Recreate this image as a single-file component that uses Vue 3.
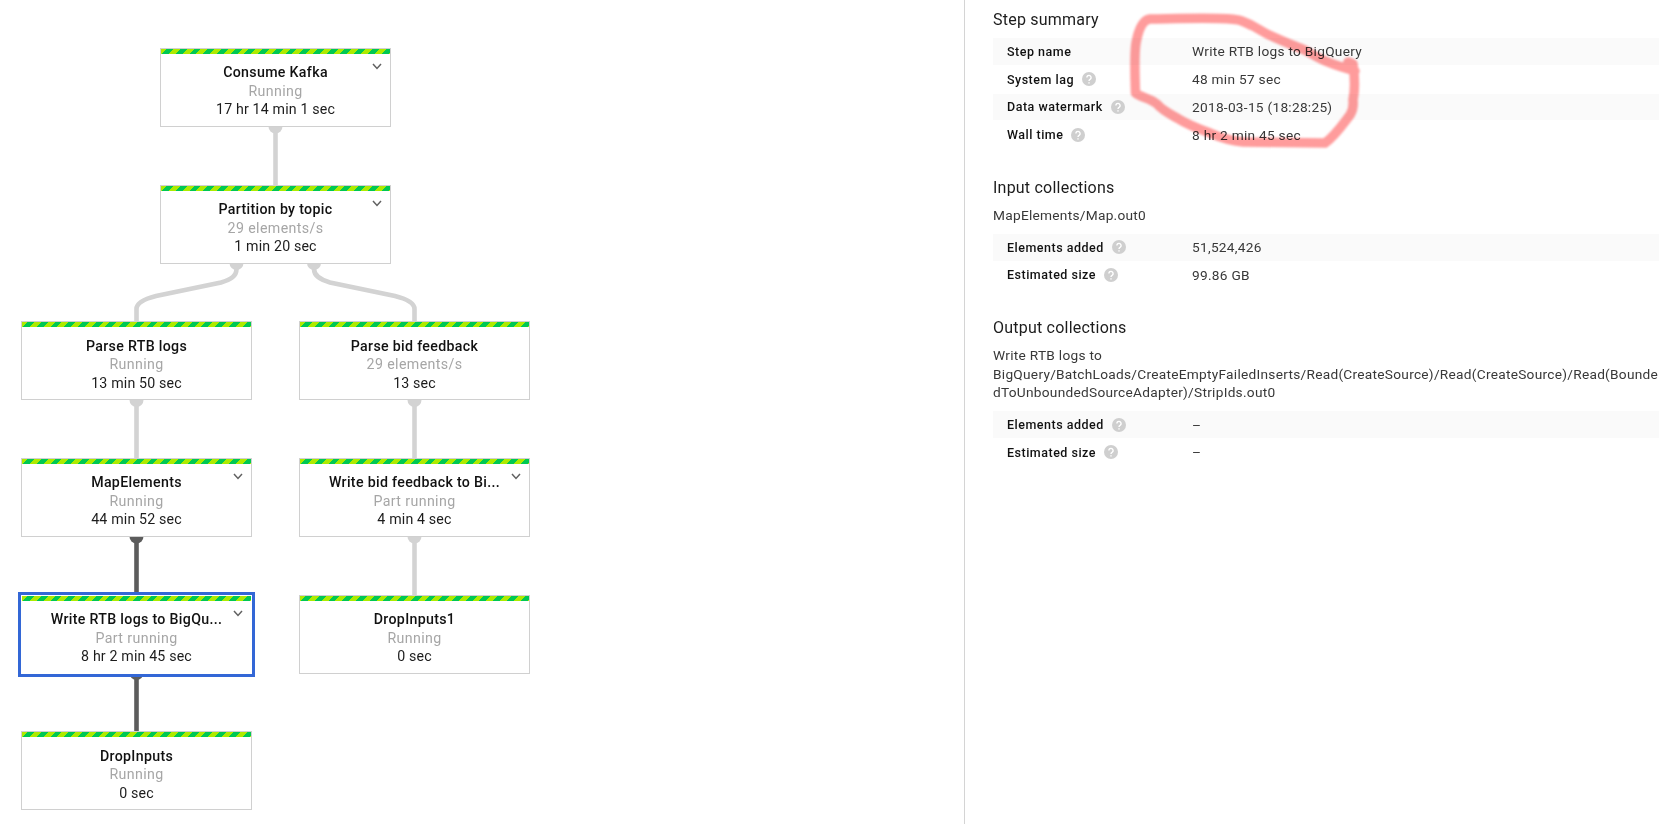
<script setup>
const nodes = [
  { name: 'Consume Kafka', status: 'Running', time: '17 hr 14 min 1 sec', x: 160, y: 48, expandable: true },
  { name: 'Partition by topic', status: '29 elements/s', time: '1 min 20 sec', x: 160, y: 185, expandable: true },
  { name: 'Parse RTB logs', status: 'Running', time: '13 min 50 sec', x: 21, y: 321.4 },
  { name: 'Parse bid feedback', status: '29 elements/s', time: '13 sec', x: 299, y: 321.4 },
  { name: 'MapElements', status: 'Running', time: '44 min 52 sec', x: 21, y: 458, expandable: true },
  { name: 'Write bid feedback to Bi...', status: 'Part running', time: '4 min 4 sec', x: 299, y: 458, expandable: true },
  { name: 'Write RTB logs to BigQu...', status: 'Part running', time: '8 hr 2 min 45 sec', x: 21, y: 594.8, expandable: true, selected: true },
  { name: 'DropInputs1', status: 'Running', time: '0 sec', x: 299, y: 594.8 },
  { name: 'DropInputs', status: 'Running', time: '0 sec', x: 21, y: 731.4 }
]

const edges = [
  { x: 275.5, y: 126.5, d: 'M275.5 126V186' },
  { x: 236.5, y: 263, d: 'M236.5 263V269C236.5 276 231 279.5 221 282.5L156 296C144 299 136.5 303 136.5 309V323' },
  { x: 314, y: 263, d: 'M314 263V269C314 276 320 279.5 330 282.5L395 296C407 299 414.5 303 414.5 309V323' },
  { x: 136.5, y: 400, d: 'M136.5 400V459' },
  { x: 414.5, y: 400, d: 'M414.5 400V459' },
  { x: 136.5, y: 536.5, d: 'M136.5 536V595', active: true },
  { x: 414.5, y: 536.5, d: 'M414.5 536V596' },
  { x: 136.5, y: 673, d: 'M136.5 673V732', active: true }
]

const sections = [
  {
    title: 'Step summary',
    rows: [
      { label: 'Step name', value: 'Write RTB logs to BigQuery' },
      { label: 'System lag', value: '48 min 57 sec', help: true },
      { label: 'Data watermark', value: '2018-03-15 (18:28:25)', help: true },
      { label: 'Wall time', value: '8 hr 2 min 45 sec', help: true }
    ]
  },
  {
    title: 'Input collections',
    path: 'MapElements/Map.out0',
    rows: [
      { label: 'Elements added', value: '51,524,426', help: true },
      { label: 'Estimated size', value: '99.86 GB', help: true }
    ]
  },
  {
    title: 'Output collections',
    path: 'Write RTB logs to BigQuery/BatchLoads/CreateEmptyFailedInserts/Read(CreateSource)/Read(CreateSource)/Read(BoundedToUnboundedSourceAdapter)/StripIds.out0',
    rows: [
      { label: 'Elements added', value: '–', help: true },
      { label: 'Estimated size', value: '–', help: true }
    ]
  }
]
</script>

<template>
  <div class="page">
    <main class="graph">
      <svg class="edges" width="964" height="824">
        <g v-for="(edge, i) in edges" :key="i" :class="['edge', { active: edge.active }]">
          <path class="line" :d="edge.d" />
          <circle class="port" :cx="edge.x" :cy="edge.y" r="7" />
        </g>
      </svg>

      <div
        v-for="node in nodes"
        :key="node.name"
        :class="['node', { selected: node.selected }]"
        :style="{ left: node.x + 'px', top: node.y + 'px' }"
      >
        <div class="stripes"></div>
        <div class="name">{{ node.name }}</div>
        <div class="status">{{ node.status }}</div>
        <div class="time">{{ node.time }}</div>
        <svg v-if="node.expandable" class="chevron" width="10" height="7" viewBox="0 0 10 7">
          <path d="M1 1l4 4.4L9 1" />
        </svg>
      </div>
    </main>

    <aside class="details">
      <section v-for="section in sections" :key="section.title">
        <h2>{{ section.title }}</h2>
        <p v-if="section.path" class="path">{{ section.path }}</p>
        <div class="rows">
          <div v-for="row in section.rows" :key="row.label" class="row">
            <div class="label">
              {{ row.label }}
              <svg v-if="row.help" class="help" width="14" height="14" viewBox="0 0 14 14">
                <circle cx="7" cy="7" r="7" />
                <path d="M4.9 5.5a2.1 2.1 0 1 1 3.4 1.6C7.5 7.7 7 8 7 9M7 10.2v1.4" />
              </svg>
            </div>
            <div class="value">{{ row.value }}</div>
          </div>
        </div>
      </section>
    </aside>

    <!-- hand-drawn marker around the step values -->
    <svg class="marker" width="260" height="160" viewBox="1120 0 260 160">
      <path
        d="M1355 71C1346 68 1336 66 1323 60C1310 54 1307 50 1297 47C1285 42 1278 39 1267 34L1253 26C1246 23 1242 20 1235 19.5C1220 17 1180 18.5 1150 19C1142 20 1138 32 1136 43C1134 56 1135 78 1135.5 93C1142 98 1150 98 1157 104C1162 110 1168 113 1177 118C1188 125 1199 129 1210 133C1221 138 1232 141 1243 142L1325 143C1335 136 1343 124 1350 115Q1354 109 1353 100Q1356 86 1353 64L1348 62"
      />
    </svg>
  </div>
</template>

<style>
body {
  margin: 0;
  overflow: hidden;
}
</style>

<style scoped>
.page {
  position: relative;
  display: flex;
  width: 1659px;
  height: 824px;
  overflow: hidden;
  background: #fff;
  color: #1c1c1c;
  font-family: Roboto, sans-serif;
}

.graph {
  position: relative;
  flex: 0 0 964px;
}

.edges {
  position: absolute;
  top: 0;
  left: 0;
}

.line {
  fill: none;
  stroke: #d3d3d3;
  stroke-width: 4.6;
}

.port {
  fill: #d3d3d3;
}

.active .line {
  stroke: #5c5c5c;
}

.active .port {
  fill: #5c5c5c;
}

.node {
  position: absolute;
  box-sizing: border-box;
  width: 231px;
  height: 79px;
  border: 1px solid #d0d0d0;
  background: #fff;
  text-align: center;
  font-size: 14.2px;
  line-height: 18.5px;
}

.selected {
  border-color: #fff;
  outline: 3px solid #3367d6;
  outline-offset: -0.5px;
}

.stripes {
  height: 5px;
  margin-bottom: 9.3px;
  background: repeating-linear-gradient(135deg, #aeea00 0 4px, #00c853 4px 8.85px, #aeea00 8.85px 9.7px);
}

.name {
  font-weight: 500;
  letter-spacing: 0.32px;
  color: #111;
}

.status {
  letter-spacing: 0.38px;
  color: #a6a6a6;
}

.time {
  letter-spacing: 0.16px;
}

.chevron {
  position: absolute;
  top: 14px;
  right: 8.5px;
  fill: none;
  stroke: #616161;
  stroke-width: 1.5;
}

.details {
  flex: 1;
  border-left: 1px solid #d4d4d4;
  padding: 9px 0 0 28px;
}

h2 {
  margin: 0;
  font-size: 16px;
  font-weight: 400;
  line-height: 22px;
  letter-spacing: 0.22px;
}

section {
  margin-bottom: 29.2px;
}

.path {
  margin: 6.5px 0 0;
  font-size: 13.7px;
  line-height: 18.6px;
  letter-spacing: 0.27px;
  overflow-wrap: anywhere;
  color: #383838;
}

.rows {
  margin-top: 7px;
}

.path + .rows {
  margin-top: 9.5px;
}

.row {
  display: flex;
  align-items: center;
  height: 26.75px;
  margin-bottom: 1px;
  padding-left: 14px;
}

.row:nth-child(odd) {
  background: #fafafa;
}

.label {
  display: flex;
  align-items: center;
  gap: 8px;
  width: 185px;
  font-size: 12.5px;
  font-weight: 500;
  letter-spacing: 0.5px;
  color: #111;
}

.value {
  font-size: 13.7px;
  letter-spacing: 0.27px;
  color: #383838;
}

.help circle {
  fill: #cfcfcf;
}

.help path {
  fill: none;
  stroke: #fff;
  stroke-width: 1.4;
}

.marker {
  position: absolute;
  top: 0;
  left: 1120px;
  fill: none;
  stroke: #ff9c9c;
  stroke-width: 9.5;
  stroke-linecap: round;
  stroke-linejoin: round;
  filter: blur(1.3px);
  mix-blend-mode: multiply;
}
</style>
